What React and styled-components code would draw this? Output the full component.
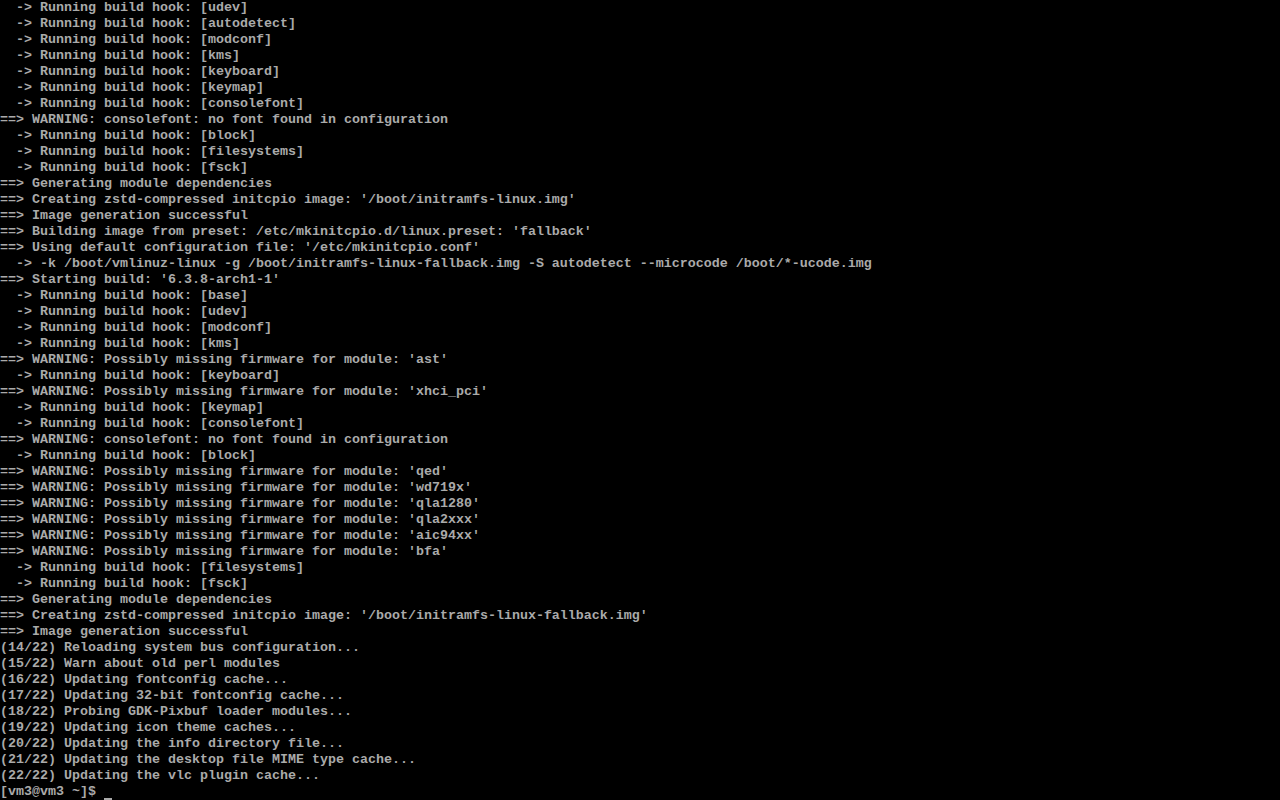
import styled, { createGlobalStyle } from "styled-components";

const GlobalStyle = createGlobalStyle`
  * {
    margin: 0;
    padding: 0;
    box-sizing: border-box;
  }
  html, body {
    width: 1280px;
    height: 800px;
    overflow: hidden;
    background-color: #000;
  }
`;

const Screen = styled.div`
  display: flex;
  flex-direction: column;
  width: 1280px;
  height: 800px;
  background-color: #000;
  color: #aaaaaa;
  font-family: "Liberation Mono", "DejaVu Sans Mono", monospace;
  font-size: 13.3333px;
  font-weight: bold;
  overflow: hidden;
`;

const Line = styled.div`
  height: 16px;
  line-height: 16px;
  white-space: pre;
`;

const Cursor = styled.span`
  display: inline-block;
  width: 8px;
  height: 16px;
  vertical-align: top;
  border-bottom: 2px solid #aaaaaa;
`;

const hook = (name) => `  -> Running build hook: [${name}]`;
const warnFw = (mod) => `==> WARNING: Possibly missing firmware for module: '${mod}'`;

const lines = [
  hook("udev"),
  hook("autodetect"),
  hook("modconf"),
  hook("kms"),
  hook("keyboard"),
  hook("keymap"),
  hook("consolefont"),
  "==> WARNING: consolefont: no font found in configuration",
  hook("block"),
  hook("filesystems"),
  hook("fsck"),
  "==> Generating module dependencies",
  "==> Creating zstd-compressed initcpio image: '/boot/initramfs-linux.img'",
  "==> Image generation successful",
  "==> Building image from preset: /etc/mkinitcpio.d/linux.preset: 'fallback'",
  "==> Using default configuration file: '/etc/mkinitcpio.conf'",
  "  -> -k /boot/vmlinuz-linux -g /boot/initramfs-linux-fallback.img -S autodetect --microcode /boot/*-ucode.img",
  "==> Starting build: '6.3.8-arch1-1'",
  hook("base"),
  hook("udev"),
  hook("modconf"),
  hook("kms"),
  warnFw("ast"),
  hook("keyboard"),
  warnFw("xhci_pci"),
  hook("keymap"),
  hook("consolefont"),
  "==> WARNING: consolefont: no font found in configuration",
  hook("block"),
  warnFw("qed"),
  warnFw("wd719x"),
  warnFw("qla1280"),
  warnFw("qla2xxx"),
  warnFw("aic94xx"),
  warnFw("bfa"),
  hook("filesystems"),
  hook("fsck"),
  "==> Generating module dependencies",
  "==> Creating zstd-compressed initcpio image: '/boot/initramfs-linux-fallback.img'",
  "==> Image generation successful",
  "(14/22) Reloading system bus configuration...",
  "(15/22) Warn about old perl modules",
  "(16/22) Updating fontconfig cache...",
  "(17/22) Updating 32-bit fontconfig cache...",
  "(18/22) Probing GDK-Pixbuf loader modules...",
  "(19/22) Updating icon theme caches...",
  "(20/22) Updating the info directory file...",
  "(21/22) Updating the desktop file MIME type cache...",
  "(22/22) Updating the vlc plugin cache...",
];

export default function App() {
  return (
    <Screen>
      <GlobalStyle />
      {lines.map((text, i) => (
        <Line key={i}>{text}</Line>
      ))}
      <Line>
        {"[vm3@vm3 ~]$ "}
        <Cursor />
      </Line>
    </Screen>
  );
}
